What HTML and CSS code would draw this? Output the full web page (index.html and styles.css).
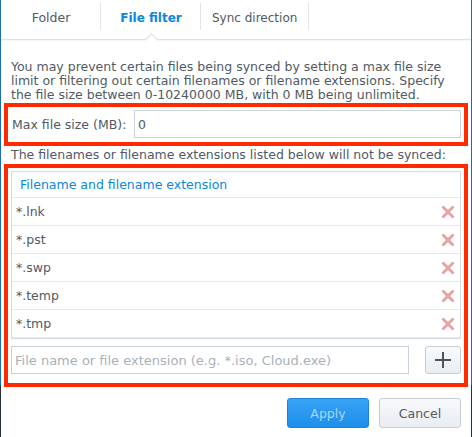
FILE: index.html
```
<!DOCTYPE html>
<html>
<head>
<meta charset="utf-8">
<link rel="stylesheet" href="styles.css">
</head>
<body>
<div class="window">
  <div class="tabs">
    <div class="tab tab-fixed">Folder</div>
    <div class="tab tab-fixed active">File filter</div>
    <div class="tab tab-auto">Sync direction</div>
  </div>
  <div class="content">
    <p class="desc">You may prevent certain files being synced by setting a max file size limit or filtering out certain filenames or filename extensions. Specify the file size between 0-10240000 MB, with 0 MB being unlimited.</p>
    <div class="hl hl-size">
      <label class="size-label">Max file size (MB):</label>
      <input class="field size-field" type="text" value="0">
    </div>
    <p class="note">The filenames or filename extensions listed below will not be synced:</p>
    <div class="hl hl-list">
      <div class="grid">
        <div class="grid-head">Filename and filename extension</div>
        <div class="grid-row"><span>*.lnk</span><svg class="del" viewBox="0 0 14 14"><path d="M1.5 1.5L12.5 12.5M12.5 1.5L1.5 12.5"/></svg></div>
        <div class="grid-row"><span>*.pst</span><svg class="del" viewBox="0 0 14 14"><path d="M1.5 1.5L12.5 12.5M12.5 1.5L1.5 12.5"/></svg></div>
        <div class="grid-row"><span>*.swp</span><svg class="del" viewBox="0 0 14 14"><path d="M1.5 1.5L12.5 12.5M12.5 1.5L1.5 12.5"/></svg></div>
        <div class="grid-row"><span>*.temp</span><svg class="del" viewBox="0 0 14 14"><path d="M1.5 1.5L12.5 12.5M12.5 1.5L1.5 12.5"/></svg></div>
        <div class="grid-row"><span>*.tmp</span><svg class="del" viewBox="0 0 14 14"><path d="M1.5 1.5L12.5 12.5M12.5 1.5L1.5 12.5"/></svg></div>
      </div>
      <div class="add-row">
        <input class="field add-field" type="text" placeholder="File name or file extension (e.g. *.iso, Cloud.exe)">
        <button class="add-btn"><svg viewBox="0 0 18 18"><path d="M9 1V17M1 9H17"/></svg></button>
      </div>
    </div>
    <div class="actions">
      <button class="btn btn-apply">Apply</button>
      <button class="btn btn-cancel">Cancel</button>
    </div>
  </div>
</div>
</body>
</html>
```
FILE: styles.css
```
* { box-sizing: border-box; }
html, body { margin: 0; padding: 0; background: #fff; }
body {
  font-family: "DejaVu Sans", Verdana, sans-serif;
  font-size: 12.5px;
  color: #505a64;
}
.window {
  width: 472px;
  height: 437px;
  border-style: solid;
  border-width: 0 1px;
  border-image: linear-gradient(#1d6fb4 0%, #1d6fb4 88%, #2c323a 88%, #2c323a 100%) 1;
  overflow: hidden;
}
.tabs {
  display: flex;
  height: 40px;
  border-bottom: 1px solid #dde2e7;
  box-shadow: 0 1px 1px rgba(0,0,0,0.04);
  font-size: 12px;
}
.tab {
  position: relative;
  height: 39px;
  line-height: 36px;
  text-align: center;
  color: #505a64;
}
.tab::after {
  content: "";
  position: absolute;
  right: 0;
  top: 3px;
  width: 1px;
  height: 27px;
  background: #e2e6ea;
}
.tab-fixed { width: 100px; font-size: 12.5px; }
.tab-auto { padding: 0 12px 0 11px; }
.tab.active {
  color: #0a86e0;
  font-weight: bold;
  font-size: 12px;
}
.tab.active::before {
  content: "";
  position: absolute;
  left: 46px;
  bottom: -5px;
  width: 8px;
  height: 8px;
  background: #fff;
  border-top: 1px solid #d8dde3;
  border-left: 1px solid #d8dde3;
  transform: rotate(45deg);
  z-index: 2;
}
.content {
  padding: 0 10px;
}
.desc {
  margin: 20px 0 0;
  line-height: 14px;
}
.hl {
  margin-left: -7px;
  margin-right: -7px;
  border: 4px solid #ff2a00;
}
.hl-size {
  margin-top: 1px;
  padding: 3px 3px 4px;
  display: flex;
  align-items: center;
}
.size-label {
  width: 123px;
  padding-left: 1px;
}
.field {
  height: 28px;
  border: 1px solid #c9d2db;
  font-family: "DejaVu Sans", Verdana, sans-serif;
  font-size: 12.5px;
  color: #505a64;
  padding: 0 3px;
  outline: none;
  background: #fff;
}
.field::placeholder { color: #a9b1ba; }
.size-field { flex: 1; }
.note {
  margin: 2px 0 3px;
  line-height: 13px;
}
.hl-list {
  padding: 3px 3px 9px;
}
.grid {
  border: 1px solid #d3dbe3;
}
.grid-head {
  height: 26px;
  line-height: 25px;
  border-bottom: 1px solid #e3e9ee;
  padding-left: 8px;
  color: #0a86e0;
}
.grid-row {
  height: 28px;
  border-bottom: 1px solid #e3e9ee;
  display: flex;
  align-items: center;
  justify-content: space-between;
  padding: 0 5px 0 4px;
}
.del {
  width: 14px;
  height: 14px;
  fill: none;
  stroke: #e8a3a3;
  stroke-width: 3;
}
.add-row {
  margin-top: 7px;
  display: flex;
  justify-content: space-between;
}
.add-field { width: 398px; font-size: 13px; }
.add-btn {
  width: 36px;
  height: 28px;
  border: 1px solid #c6cfd8;
  border-radius: 3px;
  background: linear-gradient(#f8fafc, #e9edf1);
  padding: 0;
  display: flex;
  align-items: center;
  justify-content: center;
}
.add-btn svg {
  width: 18px;
  height: 18px;
  fill: none;
  stroke: #4b5560;
  stroke-width: 2;
}
.actions {
  margin-top: 11px;
  display: flex;
  justify-content: flex-end;
  gap: 10px;
}
.btn {
  width: 82px;
  height: 30px;
  border-radius: 3px;
  font-family: "DejaVu Sans", Verdana, sans-serif;
  font-size: 12.5px;
  padding: 0;
}
.btn-apply {
  background: linear-gradient(#38a3f5, #1e8ee9);
  border: 1px solid #1d84d8;
  color: #a8d5f8;
}
.btn-cancel {
  background: linear-gradient(#f7f9fb, #e9edf1);
  border: 1px solid #c6cfd8;
  color: #505a64;
}
```
